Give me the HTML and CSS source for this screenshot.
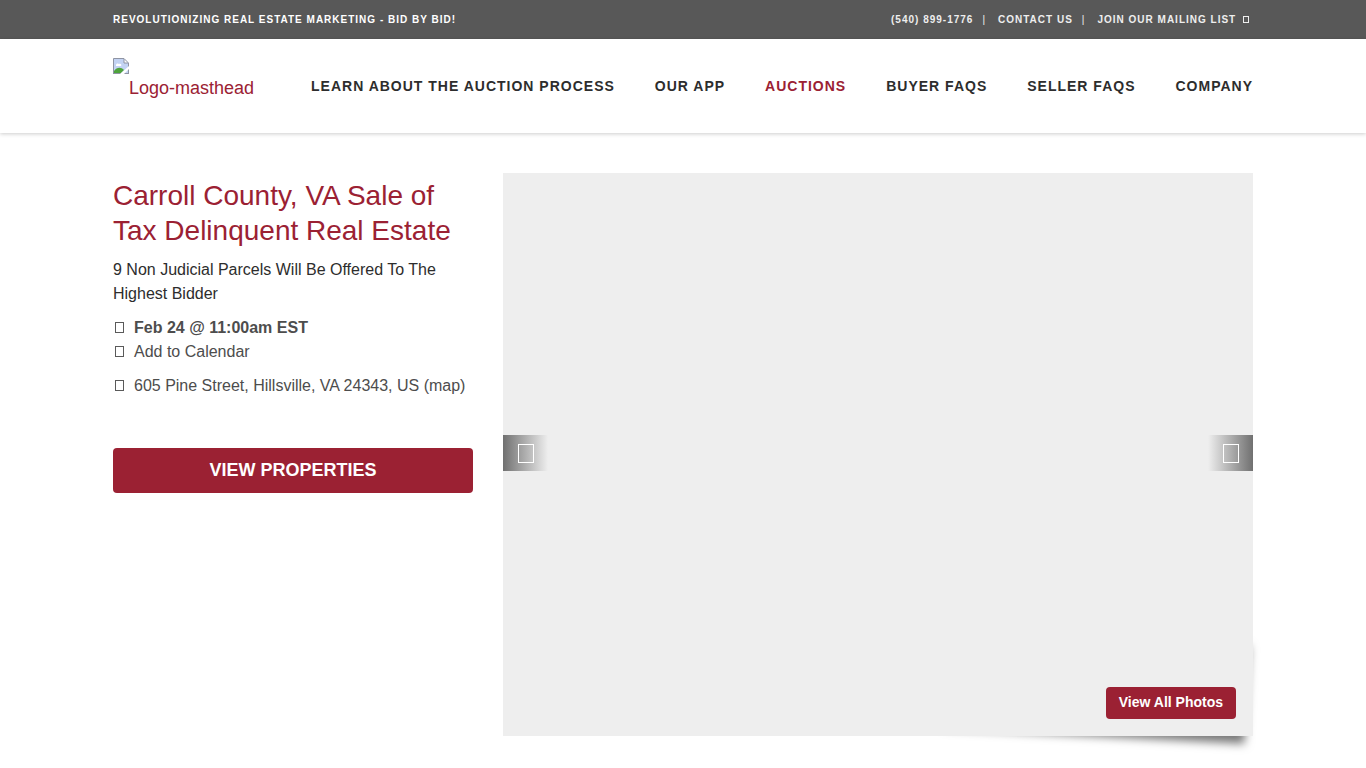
FILE: index.html
```html
<!DOCTYPE html>
<html lang="en">
<head>
    <meta charset="utf-8">
    <title>Carroll County, VA Sale of Tax Delinquent Real Estate</title>
    <link rel="stylesheet" href="styles.css">
</head>
<body>
    <div class="topbar">
        <div class="container topbar-inner">
            <span class="tagline">REVOLUTIONIZING REAL ESTATE MARKETING - BID BY BID!</span>
            <ul class="topbar-links">
                <li><a href="#">(540) 899-1776</a></li>
                <li><a href="#">CONTACT US</a></li>
                <li><a href="#">JOIN OUR MAILING LIST <svg class="icon-mail" width="6" height="8" viewBox="0 0 6 8"><rect x="0.5" y="0.5" width="5" height="6"/></svg></a></li>
            </ul>
        </div>
    </div>

    <header class="masthead">
        <div class="container masthead-inner">
            <a class="logo" href="#">
                <svg width="16" height="16" viewBox="0 0 16 16">
                    <path d="M0.5 0.5H11L15.5 5V15.5H0.5Z" fill="#c3d3f3"/>
                    <path d="M3 7C3 5.500 5 5 6 6C8 5 9 7 8 8H3Z" fill="#fff"/>
                    <path d="M1 15V13C4 9 8 9 11 12L8 15Z" fill="#4ea33c"/>
                    <path d="M11 0.500V5H15.500Z" fill="#fff"/>
                    <path d="M0.500 16V0.500H11L15.500 5V16M11 1V5H15M0.500 15.500H15" fill="none" stroke="#8f94a3"/>
                    <path d="M7 16L16 8V11L11 16Z" fill="#fff"/>
                </svg>
                <span>Logo-masthead</span>
            </a>
            <nav>
                <ul class="main-nav">
                    <li><a href="#">LEARN ABOUT THE AUCTION PROCESS</a></li>
                    <li><a href="#">OUR APP</a></li>
                    <li><a class="active" href="#">AUCTIONS</a></li>
                    <li><a href="#">BUYER FAQS</a></li>
                    <li><a href="#">SELLER FAQS</a></li>
                    <li><a href="#">COMPANY</a></li>
                </ul>
            </nav>
        </div>
    </header>

    <main class="container auction">
        <section class="details">
            <h1>Carroll County, VA Sale of Tax Delinquent Real Estate</h1>
            <p class="subtitle">9 Non Judicial Parcels Will Be Offered To The Highest Bidder</p>
            <ul class="when">
                <li><svg class="icon" width="11" height="12" viewBox="0 0 11 12"><rect x="2.5" y="0.5" width="8" height="10"/></svg><strong>Feb 24 @ 11:00am EST</strong></li>
                <li><svg class="icon" width="11" height="12" viewBox="0 0 11 12"><rect x="2.5" y="0.5" width="8" height="10"/></svg><a href="#">Add to Calendar</a></li>
            </ul>
            <p class="where"><svg class="icon" width="11" height="12" viewBox="0 0 11 12"><rect x="2.5" y="0.5" width="8" height="10"/></svg><span>605 Pine Street, Hillsville, VA 24343, US <a href="#">(map)</a></span></p>
            <a class="btn btn-lg" href="#">VIEW PROPERTIES</a>
        </section>

        <section class="gallery">
            <div class="slides">
                <button class="arrow prev" type="button" aria-label="Previous"><svg width="17" height="20" viewBox="0 0 17 20"><rect x="1.5" y="1.5" width="15" height="18"/></svg></button>
                <button class="arrow next" type="button" aria-label="Next"><svg width="17" height="20" viewBox="0 0 17 20"><rect x="1.5" y="1.5" width="15" height="18"/></svg></button>
                <button class="btn view-all" type="button">View All Photos</button>
            </div>
        </section>
    </main>
</body>
</html>
```
FILE: styles.css
```css
* {
    box-sizing: border-box;
}

body {
    font-family: "Liberation Sans", Arial, sans-serif;
    font-size: 16px;
    line-height: 24px;
    margin: 0;
    color: #4d4d4d;
    background-color: #fff;
}

a {
    color: inherit;
    text-decoration: none;
}

ul {
    list-style: none;
    margin: 0;
    padding: 0;
}

.container {
    max-width: 1170px;
    margin: 0 auto;
    padding: 0 15px;
}

/* top bar */
.topbar {
    background-color: #585858;
    color: #fff;
    font-size: 10px;
    font-weight: bold;
    line-height: 39px;
    letter-spacing: 1px;
}

.topbar-inner {
    display: flex;
    justify-content: space-between;
}

.topbar-links {
    display: flex;
    color: #eee;
    padding-right: 4px;
}

.topbar-links li + li::before {
    content: "|";
    font-weight: normal;
    margin: 0 12px 0 9px;
}

.icon-mail {
    margin-left: 3px;
    vertical-align: -1px;
    fill: none;
    stroke: #eee;
}

/* header */
.masthead {
    background-color: #fff;
    box-shadow: 0 1px 4px rgba(0, 0, 0, 0.2);
}

.masthead-inner {
    display: flex;
    justify-content: space-between;
    align-items: flex-start;
    padding-top: 19px;
    padding-bottom: 19px;
    min-height: 94px;
}

.logo {
    display: flex;
    color: #9b2133;
    font-size: 18px;
    line-height: 24px;
}

.logo span {
    padding-top: 18px;
}

.main-nav {
    display: flex;
    gap: 40px;
    padding-top: 16px;
    color: #2d2d2d;
    font-size: 14px;
    font-weight: bold;
    letter-spacing: 1px;
}

.main-nav .active {
    color: #9b2133;
}

/* auction */
.auction {
    display: grid;
    grid-template-columns: minmax(0, 360px) minmax(0, 750px);
    gap: 30px;
    padding-top: 40px;
    padding-bottom: 40px;
}

.details h1 {
    margin: 5px 0 10px;
    color: #9b2133;
    font-size: 28px;
    font-weight: normal;
    line-height: 35px;
}

.subtitle {
    margin: 0 0 10px;
    color: #2d2d2d;
}

.when {
    margin-bottom: 10px;
}

.where {
    margin: 0 0 50px;
}

.icon {
    margin-right: 10px;
    vertical-align: -1px;
    fill: none;
    stroke: #5a5a5a;
}

.btn {
    display: inline-block;
    border: 0;
    border-radius: 4px;
    padding: 3px 13px 5px;
    background-color: #9b2133;
    color: #fff;
    font-family: inherit;
    font-size: 14px;
    font-weight: bold;
    line-height: 24px;
    text-align: center;
    cursor: pointer;
}

.btn-lg {
    display: block;
    padding: 10px;
    font-size: 18px;
    line-height: 25px;
}

/* photo slider, the shadow lifts the lower right corner */
.gallery {
    position: relative;
    z-index: 0;
}

.gallery::after {
    content: "";
    position: absolute;
    z-index: -1;
    top: 80%;
    right: 5px;
    bottom: 15px;
    width: 300px;
    box-shadow: 0 15px 10px #777;
    transform: rotate(3deg);
}

.slides {
    position: relative;
    aspect-ratio: 750 / 563;
    background-color: #eee;
}

.arrow {
    position: absolute;
    top: calc(50% - 20px);
    display: flex;
    align-items: center;
    justify-content: center;
    width: 45px;
    height: 36px;
    border: 0;
    padding: 0;
    cursor: pointer;
}

.arrow svg {
    fill: none;
    stroke: #fff;
}

.prev {
    left: 0;
    background: linear-gradient(to right, #707070, rgba(112, 112, 112, 0));
}

.next {
    right: 0;
    background: linear-gradient(to left, #707070, rgba(112, 112, 112, 0));
}

.view-all {
    position: absolute;
    right: 17px;
    bottom: 17px;
}
```
